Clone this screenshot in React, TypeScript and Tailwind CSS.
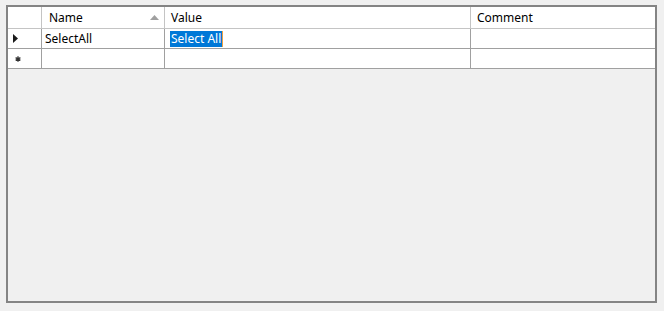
import React from "react";

const font = { fontFamily: '"Noto Sans", "Open Sans", sans-serif' };

export default function App() {
  return (
    <div className="h-[311px] w-[664px] bg-[#f0f0f0] pl-[6px] pt-[5px]" style={font}>
      <div className="h-[298px] w-[651px] border-2 border-[#848484] bg-[#f0f0f0] text-[12px] text-black">
        {/* header */}
        <div className="grid h-[22px] grid-cols-[34px_123px_306px_1fr] border-b border-[#c4c4c4] bg-white">
          <div className="border-r border-[#c4c4c4]" />
          <div className="flex items-center justify-between border-r border-[#c4c4c4] pl-[7px] pr-[4px]">
            <span>Name</span>
            <svg width="9" height="5" viewBox="0 0 9 5" className="mr-[1px]">
              <polygon points="0,5 9,5 4.5,0" fill="#a0a0a0" />
            </svg>
          </div>
          <div className="flex items-center border-r border-[#c4c4c4] pl-[6px]">Value</div>
          <div className="flex items-center pl-[6px]">Comment</div>
        </div>
        {/* row 1 */}
        <div className="grid h-[20px] grid-cols-[34px_123px_306px_1fr] border-b border-[#a0a0a0] bg-white">
          <div className="flex items-center border-r border-[#a0a0a0] pl-[5px]">
            <svg width="5" height="9" viewBox="0 0 5 9">
              <polygon points="0,0 5,4.5 0,9" fill="#1a1a1a" />
            </svg>
          </div>
          <div className="flex items-center border-r border-[#a0a0a0] pl-[3px]">SelectAll</div>
          <div className="flex items-center border-r border-[#a0a0a0] pl-[5px]">
            <span className="flex h-[16px] items-center bg-[#0078d7] pl-[1px] pr-[1px] text-white">
              Select All
            </span>
            <span className="h-[16px] w-px bg-[#f0a040]" />
          </div>
          <div />
        </div>
        {/* new row */}
        <div className="grid h-[20px] grid-cols-[34px_123px_306px_1fr] border-b border-[#a0a0a0] bg-white">
          <div className="flex items-center border-r border-[#a0a0a0] pl-[7px] pt-[1px]">
            <svg width="6" height="6" viewBox="0 0 6 6">
              <path d="M3 0.3 L3 5.7 M0.6 1.6 L5.4 4.4 M0.6 4.4 L5.4 1.6" stroke="#333" strokeWidth="1.3" />
            </svg>
          </div>
          <div className="border-r border-[#a0a0a0]" />
          <div className="border-r border-[#a0a0a0]" />
          <div />
        </div>
      </div>
    </div>
  );
}
